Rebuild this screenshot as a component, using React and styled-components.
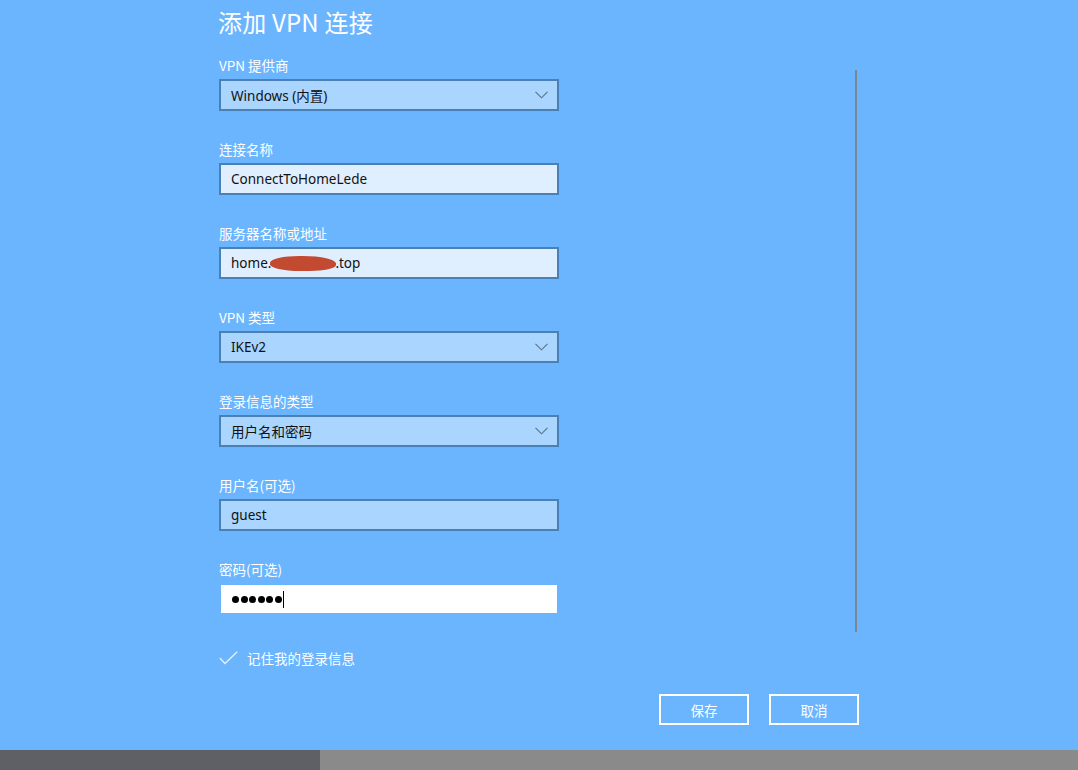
import React from "react";
import styled, { createGlobalStyle } from "styled-components";

const Global = createGlobalStyle`
  html, body { margin: 0; padding: 0; }
  body {
    background: #6bb5ff;
    font-family: "Segoe UI", "Noto Sans", "Noto Sans CJK SC", sans-serif;
  }
`;

const Page = styled.div`
  width: 1078px;
  height: 770px;
  display: flex;
  flex-direction: column;
  background: #6bb5ff;
  overflow: hidden;
`;

const Content = styled.div`
  flex: 1;
  display: flex;
  flex-direction: column;
  padding: 6px 0 0 219px;
  width: 640px;
`;

const Title = styled.h1`
  margin: 0 0 19px -1px;
  font-family: "Segoe UI", "Noto Sans CJK SC", "Noto Sans", sans-serif;
  font-weight: 400;
  font-size: 24px;
  line-height: 32px;
  color: #fff;
  letter-spacing: 0.2px;
`;

const Body = styled.div`
  display: flex;
  justify-content: space-between;
  align-items: flex-start;
`;

const Form = styled.div`
  width: 340px;
  display: flex;
  flex-direction: column;
  gap: 30px;
`;

const Field = styled.div`
  display: flex;
  flex-direction: column;
  gap: 6px;
`;

const Label = styled.div`
  font-family: "Segoe UI", "Noto Sans CJK SC", "Noto Sans", sans-serif;
  font-size: 13.5px;
  line-height: 16px;
  color: #fff;
`;

const Box = styled.div`
  box-sizing: border-box;
  height: 32px;
  border: 2px solid ${(p) => (p.$variant === "focus" ? "#6bb5ff" : "#4a80b5")};
  background: ${(p) =>
    p.$variant === "select" ? "#a9d5ff" : p.$variant === "focus" ? "#ffffff" : "#e0efff"};
  display: flex;
  align-items: center;
  justify-content: space-between;
  padding: 0 9px 0 10px;
  font-family: "Segoe UI", "Noto Sans", "Noto Sans CJK SC", sans-serif;
  font-size: 13.5px;
  color: #111;
`;

const Value = styled.span`
  display: flex;
  align-items: center;
  white-space: nowrap;
`;

const Blob = styled.span`
  display: inline-block;
  width: 66px;
  height: 15px;
  margin: 0 -1px;
  background: #c24a30;
  border-radius: 45% 50% 40% 45%;
`;

const Dots = styled.span`
  display: flex;
  align-items: center;
  gap: 1.6px;
  margin-left: 1px;
`;

const Dot = styled.span`
  width: 7px;
  height: 7px;
  border-radius: 50%;
  background: #000;
`;

const Caret = styled.span`
  width: 1px;
  height: 17px;
  background: #000;
  margin-left: 1px;
`;

const Chevron = () => (
  <svg width="13" height="8" viewBox="0 0 13 8">
    <polyline points="0.5,0.8 6.5,6.8 12.5,0.8" fill="none" stroke="#5a7189" strokeWidth="1.1" />
  </svg>
);

const Scrollbar = styled.div`
  width: 2px;
  height: 562px;
  margin: 13px 2px 0 0;
  background: #7c8793;
`;

const CheckRow = styled.div`
  display: flex;
  align-items: center;
  gap: 9px;
  margin-top: 3px;
  height: 20px;
  font-family: "Segoe UI", "Noto Sans CJK SC", "Noto Sans", sans-serif;
  font-size: 13.5px;
  color: #fff;
`;

const Buttons = styled.div`
  display: flex;
  justify-content: flex-end;
  gap: 20px;
  margin-top: 26px;
`;

const Button = styled.button`
  box-sizing: border-box;
  width: 90px;
  height: 31px;
  border: 2px solid #fff;
  background: transparent;
  color: #fff;
  font-family: "Segoe UI", "Noto Sans CJK SC", "Noto Sans", sans-serif;
  font-size: 13.5px;
  padding: 0;
  cursor: pointer;
`;

const BottomBar = styled.div`
  height: 20px;
  display: flex;
`;

const BarSegment = styled.div`
  width: ${(p) => p.$w || "auto"};
  flex: ${(p) => (p.$w ? "none" : 1)};
  background: ${(p) => p.$c};
`;

const fields = [
  { label: "VPN 提供商", value: "Windows (内置)", variant: "select" },
  { label: "连接名称", value: "ConnectToHomeLede", variant: "text" },
  { label: "服务器名称或地址", value: "server", variant: "text" },
  { label: "VPN 类型", value: "IKEv2", variant: "select" },
  { label: "登录信息的类型", value: "用户名和密码", variant: "select" },
  { label: "用户名(可选)", value: "guest", variant: "select" },
  { label: "密码(可选)", value: "password", variant: "focus" },
];

function renderValue(f) {
  if (f.value === "server") {
    return (
      <Value>
        home.<Blob />.top
      </Value>
    );
  }
  if (f.value === "password") {
    return (
      <Value>
        <Dots>
          {Array.from({ length: 6 }).map((_, i) => (
            <Dot key={i} />
          ))}
        </Dots>
        <Caret />
      </Value>
    );
  }
  return <Value>{f.value}</Value>;
}

export default function App() {
  return (
    <Page>
      <Global />
      <Content>
        <Title>添加 VPN 连接</Title>
        <Body>
          <Form>
            {fields.map((f) => (
              <Field key={f.label}>
                <Label>{f.label}</Label>
                <Box $variant={f.variant}>
                  {renderValue(f)}
                  {f.variant === "select" && f.label !== "用户名(可选)" && <Chevron />}
                </Box>
              </Field>
            ))}
            <CheckRow>
              <svg width="19" height="14" viewBox="0 0 19 14">
                <polyline points="0.8,7 6,12.5 18.2,0.8" fill="none" stroke="#e2f0ff" strokeWidth="1.4" />
              </svg>
              <span>记住我的登录信息</span>
            </CheckRow>
          </Form>
          <Scrollbar />
        </Body>
        <Buttons>
          <Button>保存</Button>
          <Button>取消</Button>
        </Buttons>
      </Content>
      <BottomBar>
        <BarSegment $w="320px" $c="#5f6065" />
        <BarSegment $c="#8a8a8a" />
      </BottomBar>
    </Page>
  );
}
